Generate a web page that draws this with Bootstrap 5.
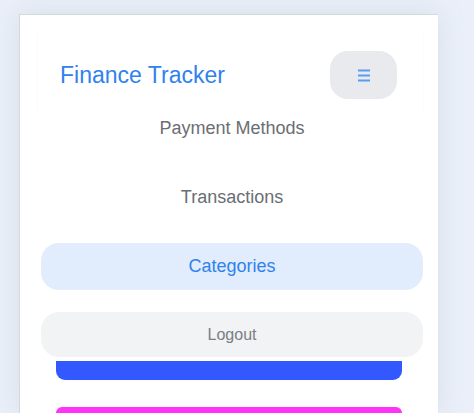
<!DOCTYPE html>
<html lang="en">
<head>
<meta charset="utf-8">
<meta name="viewport" content="width=device-width, initial-scale=1">
<title>Finance Tracker</title>
<link href="https://cdn.jsdelivr.net/npm/bootstrap@5.3.0/dist/css/bootstrap.min.css" rel="stylesheet">
<style>
body { background: #eaeff9; font-family: "Liberation Sans", Arial, sans-serif; padding: 14px 36px 0 19px; }
.app-shell { border: 1px solid #d5d9dc; border-right: 0; border-bottom: 0; box-shadow: 0 0 24px rgba(160, 180, 180, .25); padding: 20px 14px 0 17px; }
.app-bar { border: solid #fbfbfc; border-width: 0 1px; padding: 16px 26px 0 22px; height: 74px; }
.app-brand { color: #3082ed; font-size: 23px; line-height: 28px; padding-top: 10px; }
.app-brand:hover { color: #1b6fd8; }
.menu-toggle { width: 67px; height: 48px; border: 0; border-radius: 18px; background: #e8eaed; padding: 0; }
.menu-list { gap: 22px; padding: 0 1px 0 4px; margin: -4px 0 4px; }
.menu-item { border: 0; border-radius: 18px; color: #6a6e74; font-size: 18px; line-height: 23px; padding: 12px 0; background: transparent; }
.menu-item.active { background: #e1edfc; color: #2f82ee; }
.menu-item.logout { background: #f1f3f4; color: #7b7e82; font-size: 16px; line-height: 21px; }
.category-tiles { gap: 27px; padding: 0 22px 0 19px; }
.tile-blue { height: 19px; background: #3358ff; border-radius: 0 0 9px 9px; }
.tile-pink { background: #ff33f5; border-radius: 9px 9px 0 0; min-height: 6px; }
</style>
</head>
<body class="min-vh-100 d-flex flex-column">
<div class="app-shell bg-white flex-grow-1 d-flex flex-column">
  <header class="app-bar d-flex justify-content-between align-items-start">
    <a class="app-brand text-decoration-none text-nowrap" href="#">Finance Tracker</a>
    <button class="menu-toggle d-flex align-items-center justify-content-center" type="button" aria-label="Toggle menu" aria-controls="mainMenu" aria-expanded="true">
      <svg width="12" height="13" viewBox="0 0 12 13" aria-hidden="true"><path d="M0 1.5H12M0 6.5H12M0 11.5H12" stroke="#5a9cf0" stroke-width="2"/></svg>
    </button>
  </header>
  <nav id="mainMenu" class="menu-list d-flex flex-column text-center">
    <a class="menu-item text-decoration-none" href="#">Payment Methods</a>
    <a class="menu-item text-decoration-none" href="#">Transactions</a>
    <a class="menu-item active text-decoration-none" href="#" aria-current="page">Categories</a>
    <button class="menu-item logout" type="button">Logout</button>
  </nav>
  <main class="category-tiles flex-grow-1 d-flex flex-column">
    <div class="tile-blue"></div>
    <div class="tile-pink flex-grow-1"></div>
  </main>
</div>
<script src="https://cdn.jsdelivr.net/npm/bootstrap@5.3.0/dist/js/bootstrap.bundle.min.js"></script>
</body>
</html>
